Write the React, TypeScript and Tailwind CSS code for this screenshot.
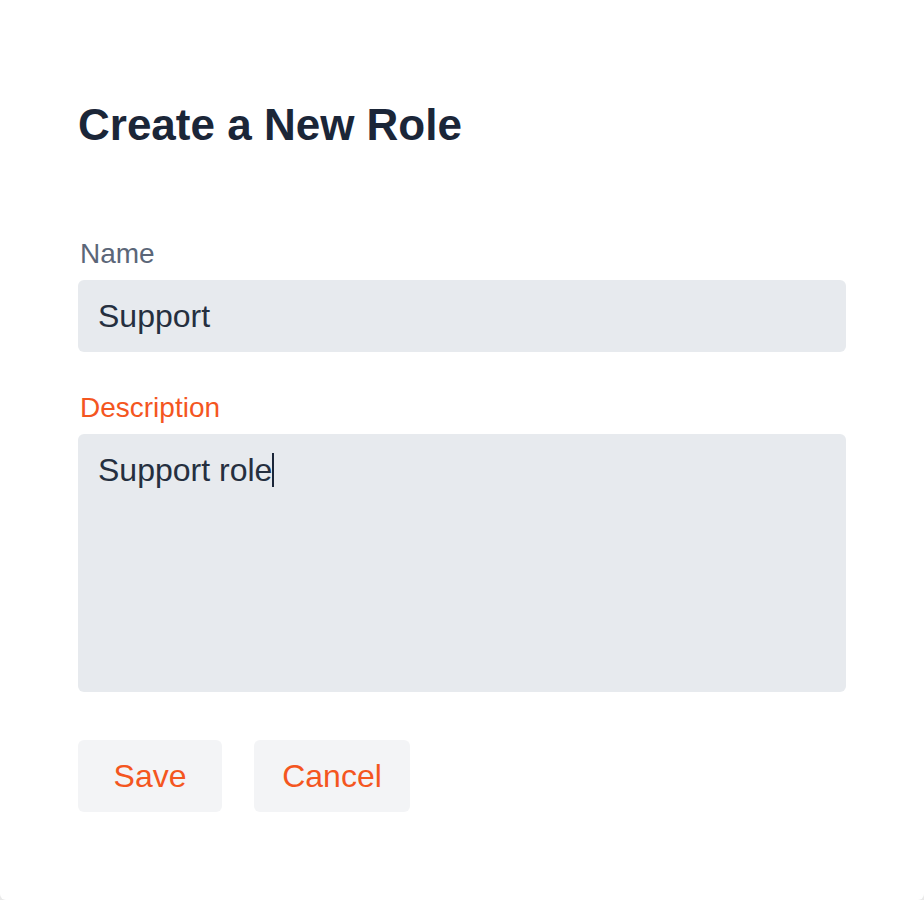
import React from "react";

const font = { fontFamily: '"Liberation Sans", Arial, Helvetica, sans-serif' };

export default function App() {
    return (
        <div className="h-[900px] w-full bg-[#e9e9e9]" style={font}>
            <div className="flex h-[900px] flex-col rounded-b-[6px] bg-white px-[78px] pt-[103px]">
                <h1 className="text-[44px] font-bold leading-none text-[#1b2638]">
                    Create a New Role
                </h1>

                <label className="mt-[93px] ml-[2px] text-[28px] leading-none text-[#5b6678]">
                    Name
                </label>
                <div className="mt-[12px] flex h-[72px] w-[768px] items-center rounded-[6px] bg-[#e7eaee] px-[20px] text-[32px] text-[#252f3f]">
                    Support
                </div>

                <label className="mt-[42px] ml-[2px] text-[28px] leading-none text-[#f4561f]">
                    Description
                </label>
                <div className="mt-[12px] h-[258px] w-[768px] rounded-[6px] bg-[#e7eaee] px-[20px] pt-[12px] text-[32px] leading-[48px] text-[#252f3f]">
                    Support role
                    <span className="inline-block h-[34px] w-[1.5px] translate-y-[6px] bg-[#1b2638]" />
                </div>

                <div className="mt-[48px] flex gap-[32px]">
                    <button className="h-[72px] w-[144px] rounded-[6px] bg-[#f3f4f6] text-[32px] text-[#f4561f]">
                        Save
                    </button>
                    <button className="h-[72px] w-[156px] rounded-[6px] bg-[#f3f4f6] text-[32px] text-[#f4561f]">
                        Cancel
                    </button>
                </div>
            </div>
        </div>
    );
}
